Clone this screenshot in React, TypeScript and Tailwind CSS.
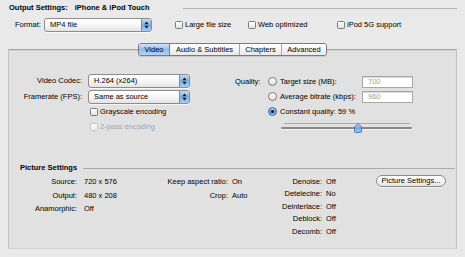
import React from "react";

function Arrows() {
  return (
    <svg width="5" height="8" viewBox="0 0 5 8">
      <path d="M2.5 0.6 L4.6 3.2 H0.4 Z M2.5 7.4 L4.6 4.8 H0.4 Z" fill="#1a1a1a" />
    </svg>
  );
}

function Popup({ label, className }: { label: string; className: string }) {
  return (
    <div
      className={
        "flex h-[14px] items-stretch overflow-hidden rounded-[3px] border border-[#8c8c8c] bg-gradient-to-b from-white via-[#f7f7f7] to-[#e3e3e3] shadow-[0_1px_0_rgba(255,255,255,0.7)] " +
        className
      }
    >
      <span className="flex flex-1 items-center pl-[5px]">{label}</span>
      <span className="flex w-[10px] items-center justify-center border-l border-[#6d8fbf] bg-gradient-to-b from-[#c6ddf7] via-[#79ace6] to-[#a6cdf4]">
        <Arrows />
      </span>
    </div>
  );
}

function Checkbox({ disabled }: { disabled?: boolean }) {
  return disabled ? (
    <span className="inline-block h-[8px] w-[8px] shrink-0 rounded-[1.5px] border border-[#c4c4c4] bg-gradient-to-b from-[#fafafa] to-[#ececec]" />
  ) : (
    <span className="inline-block h-[8px] w-[8px] shrink-0 rounded-[1.5px] border border-[#7b7b7b] bg-gradient-to-b from-white to-[#e2e2e2]" />
  );
}

function Radio({ checked }: { checked?: boolean }) {
  return checked ? (
    <span className="flex h-[9px] w-[9px] shrink-0 items-center justify-center rounded-full border border-[#3b6aa3] bg-gradient-to-b from-[#b3d3f7] via-[#5d9be2] to-[#8cc0f2]">
      <span className="h-[3px] w-[3px] rounded-full bg-[#111]" />
    </span>
  ) : (
    <span className="h-[9px] w-[9px] shrink-0 rounded-full border border-[#7a7a7a] bg-gradient-to-b from-white to-[#dedede]" />
  );
}

function Field({ value }: { value: string }) {
  return (
    <div className="flex h-[12px] w-[51px] items-center border border-[#a8a8a8] bg-white pl-[5px] text-[#a0a0a0] shadow-[inset_0_1px_0_#d8d8d8]">
      {value}
    </div>
  );
}

export default function App() {
  return (
    <div className="h-[257px] w-[465px] overflow-hidden bg-[#e9e9e9] font-['Liberation_Sans',Arial,sans-serif] text-[7.5px] leading-none text-black">
      {/* Header */}
      <div className="flex h-[16px] items-center pl-[9px] pr-[8px]">
        <span className="font-bold">Output Settings:</span>
        <span className="ml-[7px] font-bold">iPhone &amp; iPod Touch</span>
        <div className="ml-[33px] h-px flex-1 bg-[#b4b4b4]" />
      </div>

      {/* Format row */}
      <div className="mt-[1px] flex h-[16px] items-center pl-[15px]">
        <span className="w-[29px]">Format:</span>
        <Popup className="w-[108px]" label="MP4 file" />
        <div className="ml-[23px] flex w-[73px] items-center">
          <Checkbox />
          <span className="ml-[2px]">Large file size</span>
        </div>
        <div className="flex w-[89px] items-center">
          <Checkbox />
          <span className="ml-[2px]">Web optimized</span>
        </div>
        <div className="flex items-center">
          <Checkbox />
          <span className="ml-[2px]">iPod 5G support</span>
        </div>
      </div>

      {/* Tabs */}
      <div className="relative z-10 mt-[10px] flex h-[13px] pl-[138px]">
        <div className="flex h-full overflow-hidden rounded-[3px] border border-[#7a7a7a] shadow-[0_1px_1px_rgba(0,0,0,0.12)]">
          <div className="flex w-[31px] items-center justify-center border-r border-[#5f84b3] bg-gradient-to-b from-[#d2e5f9] via-[#8fbcee] to-[#b0d3f6]">
            Video
          </div>
          <div className="flex w-[70px] items-center justify-center border-r border-[#a8a8a8] bg-gradient-to-b from-white to-[#e9e9e9]">
            Audio &amp; Subtitles
          </div>
          <div className="flex w-[42px] items-center justify-center border-r border-[#a8a8a8] bg-gradient-to-b from-white to-[#e9e9e9]">
            Chapters
          </div>
          <div className="flex w-[44px] items-center justify-center bg-gradient-to-b from-white to-[#e9e9e9]">
            Advanced
          </div>
        </div>
      </div>

      {/* Panel */}
      <div className="mx-[8px] -mt-[7px] h-[200px] border border-x-[#c2c2c2] border-b-[#d2d2d2] border-t-[#a2a2a2] bg-[#e1e1e1] shadow-[inset_0_1px_1px_rgba(0,0,0,0.08)]">
        <div className="flex pt-[24px]">
          {/* Left column */}
          <div className="flex flex-col">
            <div className="flex h-[14px] items-center">
              <span className="w-[73px] text-right">Video Codec:</span>
              <Popup className="ml-[6px] w-[102px]" label="H.264 (x264)" />
            </div>
            <div className="mt-[2px] flex h-[14px] items-center">
              <span className="w-[73px] text-right">Framerate (FPS):</span>
              <Popup className="ml-[6px] w-[102px]" label="Same as source" />
            </div>
            <div className="mt-[1px] flex h-[14px] items-center pl-[81px]">
              <Checkbox />
              <span className="ml-[2px]">Grayscale encoding</span>
            </div>
            <div className="mt-[1px] flex h-[14px] items-center pl-[81px]">
              <Checkbox disabled />
              <span className="ml-[2px] text-[#a6a6a6]">2-pass encoding</span>
            </div>
          </div>

          {/* Right column */}
          <div className="ml-[45px] flex flex-col">
            <div className="flex h-[15px] items-center">
              <span className="w-[33px]">Quality:</span>
              <Radio />
              <span className="ml-[3px] w-[82px]">Target size (MB):</span>
              <Field value="700" />
            </div>
            <div className="flex h-[15px] items-center">
              <span className="w-[33px]" />
              <Radio />
              <span className="ml-[3px] w-[82px]">Average bitrate (kbps):</span>
              <Field value="960" />
            </div>
            <div className="flex h-[15px] items-center">
              <span className="w-[33px]" />
              <Radio checked />
              <span className="ml-[3px]">Constant quality: 59 %</span>
            </div>
            <div className="relative ml-[46px] h-[16px] w-[131px]">
              <div className="absolute left-[3px] right-[2px] top-[4px] h-px bg-[#a8a8a8]" />
              <div className="absolute left-0 right-0 top-[8px] h-[2px] rounded-full bg-[#8a8a8a] shadow-[0_1px_0_#f4f4f4]" />
              <svg className="absolute left-[73px] top-[4px]" width="8" height="10" viewBox="0 0 8 10">
                <defs>
                  <linearGradient id="thumb" x1="0" y1="0" x2="0" y2="1">
                    <stop offset="0" stopColor="#c9e0f9" />
                    <stop offset="0.5" stopColor="#6fa6e6" />
                    <stop offset="1" stopColor="#9fcaf4" />
                  </linearGradient>
                </defs>
                <path d="M4 0.5 L7.5 4 V8.5 Q7.5 9.5 6.5 9.5 H1.5 Q0.5 9.5 0.5 8.5 V4 Z" fill="url(#thumb)" stroke="#3f6697" strokeWidth="0.8" />
              </svg>
            </div>
          </div>
        </div>

        {/* Picture Settings header */}
        <div className="mt-[27px] flex h-[12px] items-center pl-[11px] pr-[1px]">
          <span className="font-bold">Picture Settings</span>
          <div className="ml-[6px] h-px flex-1 bg-[#ababab]" />
        </div>

        {/* Details */}
        <div className="mt-[1px] flex">
          <div className="flex flex-col">
            <div className="flex h-[13.5px] items-center">
              <span className="w-[68px] text-right">Source:</span>
              <span className="ml-[7px] w-[50px]">720 x 576</span>
              <span className="w-[94px] text-right">Keep aspect ratio:</span>
              <span className="ml-[4px] w-[30px]">On</span>
            </div>
            <div className="flex h-[13.5px] items-center">
              <span className="w-[68px] text-right">Output:</span>
              <span className="ml-[7px] w-[50px]">480 x 208</span>
              <span className="w-[94px] text-right">Crop:</span>
              <span className="ml-[4px] w-[30px]">Auto</span>
            </div>
            <div className="flex h-[13.5px] items-center">
              <span className="w-[68px] text-right">Anamorphic:</span>
              <span className="ml-[7px] w-[50px]">Off</span>
            </div>
          </div>
          <div className="flex flex-col">
            {[
              ["Denoise:", "Off"],
              ["Detelecine:", "No"],
              ["Deinterlace:", "Off"],
              ["Deblock:", "Off"],
              ["Decomb:", "Off"],
            ].map(([k, v]) => (
              <div key={k} className="flex h-[12.5px] items-center">
                <span className="w-[60px] text-right">{k}</span>
                <span className="ml-[4px] w-[30px]">{v}</span>
              </div>
            ))}
          </div>
          <div className="ml-[20px] flex h-[12px] w-[70px] items-center justify-center rounded-full border border-[#8a8a8a] bg-gradient-to-b from-white via-[#f6f6f6] to-[#e2e2e2] shadow-[0_1px_0_rgba(255,255,255,0.7)]">
            Picture Settings...
          </div>
        </div>
      </div>
    </div>
  );
}
